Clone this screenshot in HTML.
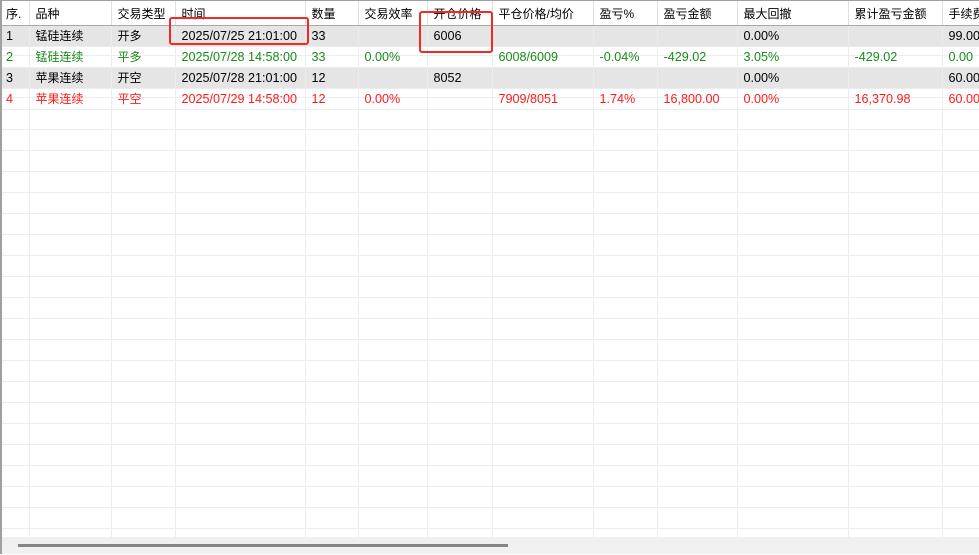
<!DOCTYPE html>
<html><head><meta charset="utf-8"><style>
body{margin:0;width:979px;height:555px;overflow:hidden;background:#fff;font-family:"Liberation Sans","Noto Sans CJK SC",sans-serif;font-size:12px;position:relative}
.wrap{position:absolute;left:0;top:0;width:979px;height:537px;border-left:2px solid #a0a0a0;box-sizing:border-box;border-top:1px solid #a0a0a0;overflow:hidden;
background-image:repeating-linear-gradient(to bottom,transparent 0,transparent 20px,#ececec 20px,#ececec 21px);background-position:0 108px;}
table{border-collapse:collapse;table-layout:fixed;position:absolute;left:-2px;top:-1px;width:992px}
td,th{height:21px;padding:0 0 0 6px;white-space:nowrap;overflow:hidden;border-right:1px solid #ececec;border-bottom:1px solid #ececec;box-sizing:border-box;text-align:left;font-weight:normal}
th{height:25px;padding-top:2px;background:#fff;border-bottom:1px solid #a8a8a8;border-right:1px solid #e0e0e0;color:#000}
td.n{font-size:12.6px}
tr.g td{background:#e5e5e5}
tr.gr td{color:#198a1a}
tr.r td{color:#ff1a1a}
.vl{position:absolute;top:109px;bottom:0;width:1px;background:#ececec}
.box{position:absolute;border:2px solid #f02a2a;border-radius:3px}
.sb{position:absolute;left:0;top:537px;width:979px;height:17px;background:#f0f0f0;border-left:2px solid #a0a0a0;box-sizing:border-box}
.th{position:absolute;left:18px;top:544px;width:490px;height:3px;background:#858585}
</style></head><body>
<div class="wrap">
<table>
<colgroup><col style="width:29px"><col style="width:82px"><col style="width:64px"><col style="width:130px"><col style="width:53px"><col style="width:69px"><col style="width:65px"><col style="width:101px"><col style="width:64px"><col style="width:80px"><col style="width:111px"><col style="width:94px"><col style="width:50px"></colgroup>
<tr><th>序.</th><th>品种</th><th>交易类型</th><th>时间</th><th>数量</th><th>交易效率</th><th>开仓价格</th><th>平仓价格/均价</th><th>盈亏%</th><th>盈亏金额</th><th>最大回撤</th><th>累计盈亏金额</th><th>手续费</th></tr>
<tr class="g"><td class="n">1</td><td>锰硅连续</td><td>开多</td><td class="n">2025/07/25 21:01:00</td><td class="n">33</td><td></td><td class="n">6006</td><td></td><td></td><td></td><td class="n">0.00%</td><td></td><td class="n">99.00</td></tr>
<tr class="gr"><td class="n">2</td><td>锰硅连续</td><td>平多</td><td class="n">2025/07/28 14:58:00</td><td class="n">33</td><td class="n">0.00%</td><td></td><td class="n">6008/6009</td><td class="n">-0.04%</td><td class="n">-429.02</td><td class="n">3.05%</td><td class="n">-429.02</td><td class="n">0.00</td></tr>
<tr class="g"><td class="n">3</td><td>苹果连续</td><td>开空</td><td class="n">2025/07/28 21:01:00</td><td class="n">12</td><td></td><td class="n">8052</td><td></td><td></td><td></td><td class="n">0.00%</td><td></td><td class="n">60.00</td></tr>
<tr class="r"><td class="n">4</td><td>苹果连续</td><td>平空</td><td class="n">2025/07/29 14:58:00</td><td class="n">12</td><td class="n">0.00%</td><td></td><td class="n">7909/8051</td><td class="n">1.74%</td><td class="n">16,800.00</td><td class="n">0.00%</td><td class="n">16,370.98</td><td class="n">60.00</td></tr>
</table>
<div class="vl" style="left:27px"></div><div class="vl" style="left:109px"></div><div class="vl" style="left:173px"></div><div class="vl" style="left:303px"></div><div class="vl" style="left:356px"></div><div class="vl" style="left:425px"></div><div class="vl" style="left:490px"></div><div class="vl" style="left:591px"></div><div class="vl" style="left:655px"></div><div class="vl" style="left:735px"></div><div class="vl" style="left:846px"></div><div class="vl" style="left:940px"></div>
</div>
<div class="box" style="left:169px;top:17px;width:136px;height:24px"></div>
<div class="box" style="left:419px;top:11px;width:70px;height:38px"></div>
<div class="sb"></div><div class="th"></div>
</body></html>
